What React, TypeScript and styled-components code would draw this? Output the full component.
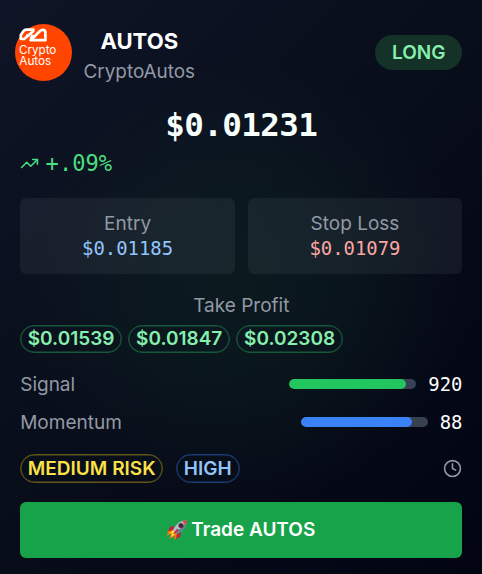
import React from "react";
import styled, { createGlobalStyle } from "styled-components";
import { Clock, TrendingUp } from "lucide-react";

const GlobalStyle = createGlobalStyle`
  * { box-sizing: border-box; }
  html, body { margin: 0; background: #050916; }
`;

const Card = styled.main`
  width: 482px;
  height: 574px;
  padding: 24px 19.6px 15px 20.2px;
  overflow: hidden;
  font-family: Inter, sans-serif;
  font-size: 19px;
  line-height: 25px;
  color: #9299a5;
  background:
    radial-gradient(circle at 50% 50%, rgba(20, 60, 45, 0.28) 0%, rgba(20, 60, 45, 0.18) 30%, rgba(20, 60, 45, 0) 60%),
    linear-gradient(135deg, #0f1526 0%, #080d1a 50%, #020412 100%);
`;

const Header = styled.header`
  display: flex;
  height: 57px;
  margin-left: -5.2px;
`;

const Avatar = styled.svg`
  width: 57px;
  height: 57px;
  flex: none;
`;

const Identity = styled.div`
  display: flex;
  flex-direction: column;
  align-items: center;
  margin-left: 11.5px;
  padding-top: 2px;
`;

const Symbol = styled.h1`
  margin: 0;
  font-size: 22.1px;
  line-height: 30px;
  font-weight: 700;
  color: #fff;
`;

const Name = styled.span`
  font-size: 18.9px;
  line-height: 31px;
`;

const Side = styled.span`
  display: flex;
  align-items: center;
  justify-content: center;
  width: 87.5px;
  height: 35px;
  margin: 11px 0 0 auto;
  border-radius: 18px;
  background: #153229;
  color: #86efac;
  font-weight: 600;
`;

const Mono = styled.span<{ $size: number; $color: string; $track?: number; $bold?: boolean }>`
  font-family: "DejaVu Sans Mono", monospace;
  font-size: ${(p) => p.$size}px;
  letter-spacing: ${(p) => p.$track ?? 0}px;
  font-weight: ${(p) => (p.$bold ? 700 : 400)};
  color: ${(p) => p.$color};
`;

const Price = styled.div`
  display: flex;
  justify-content: center;
  height: 44px;
  margin-top: 22px;
  line-height: 44px;
`;

const Change = styled.div`
  display: flex;
  align-items: center;
  gap: 6.4px;
  height: 32px;
  color: #4ade80;
`;

const Levels = styled.section`
  display: grid;
  grid-template-columns: 1fr 1fr;
  gap: 12.5px;
  margin-top: 19px;
`;

const Level = styled.div`
  display: flex;
  flex-direction: column;
  align-items: center;
  height: 75.5px;
  padding-top: 13px;
  border-radius: 6px;
  background: rgba(240, 255, 255, 0.06);
`;

const TargetsTitle = styled.h2`
  margin: 19.5px 0 6.5px;
  font-size: 19px;
  line-height: 25px;
  font-weight: 400;
  text-align: center;
`;

const Row = styled.div<{ $gap: number; $top?: number }>`
  display: flex;
  align-items: center;
  gap: ${(p) => p.$gap}px;
  margin-top: ${(p) => p.$top ?? 0}px;
`;

const Pill = styled.span<{ $width: number; $color: string; $border: string }>`
  display: flex;
  align-items: center;
  justify-content: center;
  width: ${(p) => p.$width}px;
  height: 28.5px;
  border: 1px solid ${(p) => p.$border};
  box-shadow: inset 0 0 0 0.5px ${(p) => p.$border};
  border-radius: 15px;
  font-weight: 600;
  line-height: 25px;
  white-space: nowrap;
  color: ${(p) => p.$color};
`;

const Metric = styled.div`
  display: flex;
  align-items: center;
  height: 38px;
`;

const Track = styled.div`
  width: 127px;
  height: 9.5px;
  margin: 0 12px 0 auto;
  overflow: hidden;
  border-radius: 5px;
  background: #374151;
`;

const Fill = styled.div<{ $percent: number; $color: string }>`
  width: ${(p) => p.$percent}%;
  height: 100%;
  border-radius: 5px;
  background: ${(p) => p.$color};
`;

const MetricList = styled.section`
  margin-top: 12px;
`;

const Time = styled(Clock)`
  margin-left: auto;
`;

const Trade = styled.button`
  display: flex;
  align-items: center;
  justify-content: center;
  gap: 3px;
  width: 100%;
  height: 56px;
  margin-top: 19.3px;
  padding: 0;
  border: 0;
  border-radius: 6px;
  background: #16a34a;
  color: #fff;
  font: 600 19px Inter, sans-serif;
`;

const Logo = () => (
  <Avatar viewBox="0 0 57 57">
    <circle cx="28.5" cy="28.5" r="28.5" fill="#ff4500" />
    <path
      d="M19.5 5.6H11.5Q9.5 5.6 8.2 7.4L5.8 11V15H9.2L19 6.6M17.5 10.6 15.6 16.2H30.4V8.5Q30.4 5.8 27.6 5.8Q26.2 5.8 25 7L15.6 16.2M11 11.5H14.5"
      fill="none"
      stroke="#fff"
      strokeWidth="2.7"
      strokeLinejoin="round"
    />
    <g fill="#fff" fontFamily="Inter, sans-serif" fontSize="11.6">
      <text x="4" y="30" textLength="37.3" lengthAdjust="spacingAndGlyphs">Crypto</text>
      <text x="4.3" y="40.8" textLength="32" lengthAdjust="spacingAndGlyphs">Autos</text>
    </g>
  </Avatar>
);

const Rocket = () => (
  <svg width="21" height="21" viewBox="0 0 21 21" aria-hidden="true">
    <path d="M6 10 1 12 0 17 5 14 2 20 8 17 7 21 12 17 12 13Z" fill="#f97316" />
    <path d="M6 11 2 15 5 14 4 18 9 15Z" fill="#ffdf35" />
    <path d="M8 7 3 8 1 12 7 11ZM14 13 13 18 9 20 10 14Z" fill="#bd2636" />
    <path d="M20 1Q11 1 6 11L10 15Q20 10 20 1Z" fill="#a9c4d0" />
    <path d="M20 1Q16 9 8 13L10 15Q20 10 20 1Z" fill="#617e91" />
    <path d="M20 1 15 2 19 6Z" fill="#d24445" />
    <circle cx="14" cy="6.5" r="2.6" fill="#792c37" />
    <circle cx="14" cy="6.5" r="1.5" fill="#222b38" />
    <path d="M11 10 7 15" stroke="#cd313f" strokeWidth="2" />
  </svg>
);

const targets = [
  { value: "$0.01539", width: 101.8 },
  { value: "$0.01847", width: 101.8 },
  { value: "$0.02308", width: 106.4 },
];

const metrics = [
  { label: "Signal", value: "920", percent: 92, color: "#22c55e" },
  { label: "Momentum", value: "88", percent: 87.5, color: "#3b82f6" },
];

export default function App() {
  return (
    <>
      <GlobalStyle />
      <Card>
        <Header>
          <Logo />
          <Identity>
            <Symbol>AUTOS</Symbol>
            <Name>CryptoAutos</Name>
          </Identity>
          <Side>LONG</Side>
        </Header>
        <Price>
          <Mono $size={32.6} $track={-0.6} $color="#f8fffc" $bold>$0.01231</Mono>
        </Price>
        <Change>
          <TrendingUp size={19} strokeWidth={2} />
          <Mono $size={22.1} $color="#4ade80">+.09%</Mono>
        </Change>
        <Levels>
          <Level>
            <span>Entry</span>
            <Mono $size={18.9} $color="#93c5fd">$0.01185</Mono>
          </Level>
          <Level>
            <span>Stop Loss</span>
            <Mono $size={18.9} $color="#fca5a5">$0.01079</Mono>
          </Level>
        </Levels>
        <TargetsTitle>Take Profit</TargetsTitle>
        <Row $gap={6.3}>
          {targets.map((t) => (
            <Pill key={t.value} $width={t.width} $color="#86efac" $border="#17583a">
              {t.value}
            </Pill>
          ))}
        </Row>
        <MetricList>
          {metrics.map((m) => (
            <Metric key={m.label}>
              <span>{m.label}</span>
              <Track>
                <Fill $percent={m.percent} $color={m.color} />
              </Track>
              <Mono $size={18.9} $color="#fff">{m.value}</Mono>
            </Metric>
          ))}
        </MetricList>
        <Row $gap={12.5} $top={13}>
          <Pill $width={143} $color="#fde047" $border="#655719">MEDIUM RISK</Pill>
          <Pill $width={64} $color="#93c5fd" $border="#1d3c71">HIGH</Pill>
          <Time size={19} strokeWidth={2} />
        </Row>
        <Trade>
          <Rocket />
          Trade AUTOS
        </Trade>
      </Card>
    </>
  );
}
